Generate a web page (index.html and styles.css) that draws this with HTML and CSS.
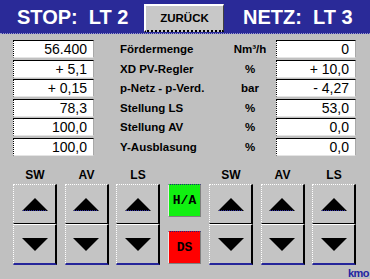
FILE: index.html
```html
<!DOCTYPE html>
<html>
<head>
<meta charset="utf-8">
<link rel="stylesheet" href="styles.css">
</head>
<body>
<div class="screen">
  <header class="top">
    <div class="title first">STOP:&nbsp; LT 2</div>
    <div class="back">ZURÜCK</div>
    <div class="title">NETZ:&nbsp; LT 3</div>
  </header>

  <div class="table">
    <div class="val">56.400</div><div class="lbl">Fördermenge</div><div class="unit">Nm³/h</div><div class="val">0</div>
    <div class="val">+ 5,1</div><div class="lbl">XD PV-Regler</div><div class="unit">%</div><div class="val">+ 10,0</div>
    <div class="val">+ 0,15</div><div class="lbl">p-Netz - p-Verd.</div><div class="unit">bar</div><div class="val">- 4,27</div>
    <div class="val">78,3</div><div class="lbl">Stellung LS</div><div class="unit">%</div><div class="val">53,0</div>
    <div class="val">100,0</div><div class="lbl">Stellung AV</div><div class="unit">%</div><div class="val">0,0</div>
    <div class="val">100,0</div><div class="lbl">Y-Ausblasung</div><div class="unit">%</div><div class="val">0,0</div>
  </div>

  <div class="controls">
    <div class="group">
      <div class="col">
        <div class="colname">SW</div>
        <div class="arrow up"><svg width="26" height="13" viewBox="0 0 26 13"><polygon points="0,13 13,0 26,13" fill="#000"/><line x1="1" y1="12.5" x2="25" y2="12.5" stroke="#2a2aa0" stroke-width="1" stroke-dasharray="1 1"/></svg></div>
        <div class="arrow down"><svg width="26" height="13" viewBox="0 0 26 13"><polygon points="0,0 26,0 13,13" fill="#000"/></svg></div>
      </div>
      <div class="col">
        <div class="colname">AV</div>
        <div class="arrow up"><svg width="26" height="13" viewBox="0 0 26 13"><polygon points="0,13 13,0 26,13" fill="#000"/><line x1="1" y1="12.5" x2="25" y2="12.5" stroke="#2a2aa0" stroke-width="1" stroke-dasharray="1 1"/></svg></div>
        <div class="arrow down"><svg width="26" height="13" viewBox="0 0 26 13"><polygon points="0,0 26,0 13,13" fill="#000"/></svg></div>
      </div>
      <div class="col">
        <div class="colname">LS</div>
        <div class="arrow up"><svg width="26" height="13" viewBox="0 0 26 13"><polygon points="0,13 13,0 26,13" fill="#000"/><line x1="1" y1="12.5" x2="25" y2="12.5" stroke="#2a2aa0" stroke-width="1" stroke-dasharray="1 1"/></svg></div>
        <div class="arrow down"><svg width="26" height="13" viewBox="0 0 26 13"><polygon points="0,0 26,0 13,13" fill="#000"/></svg></div>
      </div>
    </div>

    <div class="center">
      <div class="mode ha">H/A</div>
      <div class="mode ds">DS</div>
    </div>

    <div class="group">
      <div class="col">
        <div class="colname">SW</div>
        <div class="arrow up"><svg width="26" height="13" viewBox="0 0 26 13"><polygon points="0,13 13,0 26,13" fill="#000"/><line x1="1" y1="12.5" x2="25" y2="12.5" stroke="#2a2aa0" stroke-width="1" stroke-dasharray="1 1"/></svg></div>
        <div class="arrow down"><svg width="26" height="13" viewBox="0 0 26 13"><polygon points="0,0 26,0 13,13" fill="#000"/></svg></div>
      </div>
      <div class="col">
        <div class="colname">AV</div>
        <div class="arrow up"><svg width="26" height="13" viewBox="0 0 26 13"><polygon points="0,13 13,0 26,13" fill="#000"/><line x1="1" y1="12.5" x2="25" y2="12.5" stroke="#2a2aa0" stroke-width="1" stroke-dasharray="1 1"/></svg></div>
        <div class="arrow down"><svg width="26" height="13" viewBox="0 0 26 13"><polygon points="0,0 26,0 13,13" fill="#000"/></svg></div>
      </div>
      <div class="col">
        <div class="colname">LS</div>
        <div class="arrow up"><svg width="26" height="13" viewBox="0 0 26 13"><polygon points="0,13 13,0 26,13" fill="#000"/><line x1="1" y1="12.5" x2="25" y2="12.5" stroke="#2a2aa0" stroke-width="1" stroke-dasharray="1 1"/></svg></div>
        <div class="arrow down"><svg width="26" height="13" viewBox="0 0 26 13"><polygon points="0,0 26,0 13,13" fill="#000"/></svg></div>
      </div>
    </div>
  </div>

  <div class="sig">kmo</div>
</div>
</body>
</html>
```

FILE: styles.css
```css
html, body {
  margin: 0;
  padding: 0;
}
body {
  background: #c0c0c0;
  font-family: "Liberation Sans", Arial, sans-serif;
  color: #000;
  width: 370px;
  height: 279px;
  overflow: hidden;
}

.top {
  display: flex;
  align-items: flex-start;
  height: 33px;
  background: #2a2a98;
  border-bottom: 1px dotted #9a9ad0;
  padding-left: 17px;
}
.title {
  color: #fff;
  font-weight: bold;
  font-size: 20px;
  line-height: 31px;
  padding-top: 2px;
  white-space: nowrap;
}
.title.first {
  width: 127px;
}
.back {
  box-sizing: border-box;
  width: 80px;
  height: 28px;
  margin-top: 4px;
  margin-right: 19px;
  background: #c8c8c8;
  border-top: 2px solid #fff;
  border-left: 2px solid #fff;
  border-right: 1px solid #404040;
  border-bottom: 2px dotted #000;
  font-weight: bold;
  font-size: 11.5px;
  line-height: 24px;
  text-align: center;
}

.table {
  display: grid;
  grid-template-columns: 81px 1fr 48px 80px;
  row-gap: 1.5px;
  margin: 6px 14px 0 13px;
}
.val {
  box-sizing: border-box;
  height: 18px;
  background: #fff;
  border-top: 1px solid #000;
  border-left: 1px dotted #000;
  border-right: 1px solid #a8a8a8;
  border-bottom: 1px solid #e4e4e4;
  text-align: right;
  padding-right: 6px;
  font-size: 14px;
  line-height: 16px;
}
.lbl {
  padding-left: 26px;
  font-weight: bold;
  font-size: 11.5px;
  line-height: 18px;
  white-space: nowrap;
}
.unit {
  padding-right: 4px;
  text-align: center;
  font-weight: bold;
  font-size: 11.5px;
  line-height: 18px;
}

.controls {
  display: flex;
  gap: 8px;
  margin: 12px 0 0 13px;
}
.group {
  display: flex;
  gap: 7.5px;
}
.col {
  display: flex;
  flex-direction: column;
  width: 44px;
}
.colname {
  text-align: center;
  font-weight: bold;
  font-size: 12px;
  line-height: 14px;
  margin-bottom: 2.5px;
}
.arrow {
  box-sizing: border-box;
  display: flex;
  align-items: center;
  justify-content: center;
  height: 40px;
  background: #c4c4c4;
  border-top: 1px dotted #fff;
  border-left: 1px dotted #fff;
  border-right: 2px solid #000;
  border-bottom: 1px solid #000;
}
.arrow.down {
  height: 41px;
  border-top: 1px solid #fff;
  border-bottom: 2px solid #25259a;
}
.arrow svg {
  display: block;
}

.center {
  display: flex;
  flex-direction: column;
  gap: 14px;
  width: 33px;
  padding-top: 16.5px;
}
.mode {
  box-sizing: border-box;
  height: 33px;
  border-top: 1px dotted #202080;
  border-left: 1px solid #e8e8e8;
  border-right: 1px solid #808080;
  border-bottom: 1px solid #808080;
  font-family: "Liberation Mono", "Courier New", monospace;
  font-weight: bold;
  font-size: 13px;
  line-height: 31px;
  text-align: center;
}
.ha {
  background: #11f011;
}
.ds {
  background: #ff0000;
}

.sig {
  text-align: right;
  padding-right: 1px;
  margin-top: 2px;
  color: #2424a0;
  font-weight: bold;
  font-size: 11px;
  line-height: 12px;
  letter-spacing: -0.5px;
}
```
